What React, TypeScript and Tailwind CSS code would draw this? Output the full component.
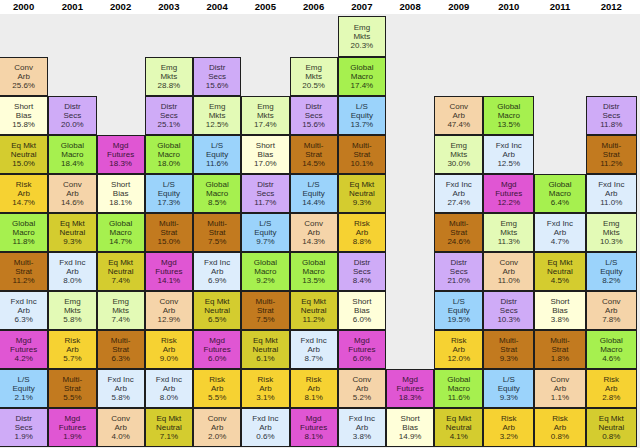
import React from "react";

type Strat = { a: string; b: string; bg: string; fg: string };

const S: Record<string, Strat> = {
  conv: { a: "Conv", b: "Arb", bg: "bg-[#f5d4a9]", fg: "text-[#3a3328]" },
  short: { a: "Short", b: "Bias", bg: "bg-[#ffffd9]", fg: "text-[#33332c]" },
  eqmn: { a: "Eq Mkt", b: "Neutral", bg: "bg-[#d4cc2f]", fg: "text-[#2f2c10]" },
  risk: { a: "Risk", b: "Arb", bg: "bg-[#f6d232]", fg: "text-[#3a3010]" },
  macro: { a: "Global", b: "Macro", bg: "bg-[#a6f04f]", fg: "text-[#263a14]" },
  multi: { a: "Multi-", b: "Strat", bg: "bg-[#c27a1f]", fg: "text-[#3b2508]" },
  fxd: { a: "Fxd Inc", b: "Arb", bg: "bg-[#ddedfc]", fg: "text-[#2e343c]" },
  mgd: { a: "Mgd", b: "Futures", bg: "bg-[#e056d3]", fg: "text-[#3c1538]" },
  ls: { a: "L/S", b: "Equity", bg: "bg-[#9bd3fb]", fg: "text-[#1e3444]" },
  distr: { a: "Distr", b: "Secs", bg: "bg-[#cfabf7]", fg: "text-[#342a40]" },
  emg: { a: "Emg", b: "Mkts", bg: "bg-[#e3fab6]", fg: "text-[#343a2c]" },
};

const years: { year: string; cells: [string, string][] }[] = [
  { year: "2000", cells: [["conv", "25.6"], ["short", "15.8"], ["eqmn", "15.0"], ["risk", "14.7"], ["macro", "11.8"], ["multi", "11.2"], ["fxd", "6.3"], ["mgd", "4.2"], ["ls", "2.1"], ["distr", "1.9"]] },
  { year: "2001", cells: [["distr", "20.0"], ["macro", "18.4"], ["conv", "14.6"], ["eqmn", "9.3"], ["fxd", "8.0"], ["emg", "5.8"], ["risk", "5.7"], ["multi", "5.5"], ["mgd", "1.9"]] },
  { year: "2002", cells: [["mgd", "18.3"], ["short", "18.1"], ["macro", "14.7"], ["eqmn", "7.4"], ["emg", "7.4"], ["multi", "6.3"], ["fxd", "5.8"], ["conv", "4.0"]] },
  { year: "2003", cells: [["emg", "28.8"], ["distr", "25.1"], ["macro", "18.0"], ["ls", "17.3"], ["multi", "15.0"], ["mgd", "14.1"], ["conv", "12.9"], ["risk", "9.0"], ["fxd", "8.0"], ["eqmn", "7.1"]] },
  { year: "2004", cells: [["distr", "15.6"], ["emg", "12.5"], ["ls", "11.6"], ["macro", "8.5"], ["multi", "7.5"], ["fxd", "6.9"], ["eqmn", "6.5"], ["mgd", "6.0"], ["risk", "5.5"], ["conv", "2.0"]] },
  { year: "2005", cells: [["emg", "17.4"], ["short", "17.0"], ["distr", "11.7"], ["ls", "9.7"], ["macro", "9.2"], ["multi", "7.5"], ["eqmn", "6.1"], ["risk", "3.1"], ["fxd", "0.6"]] },
  { year: "2006", cells: [["emg", "20.5"], ["distr", "15.6"], ["multi", "14.5"], ["ls", "14.4"], ["conv", "14.3"], ["macro", "13.5"], ["eqmn", "11.2"], ["fxd", "8.7"], ["risk", "8.1"], ["mgd", "8.1"]] },
  { year: "2007", cells: [["emg", "20.3"], ["macro", "17.4"], ["ls", "13.7"], ["multi", "10.1"], ["eqmn", "9.3"], ["risk", "8.8"], ["distr", "8.4"], ["short", "6.0"], ["mgd", "6.0"], ["conv", "5.2"], ["fxd", "3.8"]] },
  { year: "2008", cells: [["mgd", "18.3"], ["short", "14.9"]] },
  { year: "2009", cells: [["conv", "47.4"], ["emg", "30.0"], ["fxd", "27.4"], ["multi", "24.6"], ["distr", "21.0"], ["ls", "19.5"], ["risk", "12.0"], ["macro", "11.6"], ["eqmn", "4.1"]] },
  { year: "2010", cells: [["macro", "13.5"], ["fxd", "12.5"], ["mgd", "12.2"], ["emg", "11.3"], ["conv", "11.0"], ["distr", "10.3"], ["multi", "9.3"], ["ls", "9.3"], ["risk", "3.2"]] },
  { year: "2011", cells: [["macro", "6.4"], ["fxd", "4.7"], ["eqmn", "4.5"], ["short", "3.8"], ["multi", "1.8"], ["conv", "1.1"], ["risk", "0.8"]] },
  { year: "2012", cells: [["distr", "11.8"], ["multi", "11.2"], ["fxd", "11.0"], ["emg", "10.3"], ["ls", "8.2"], ["conv", "7.8"], ["macro", "4.6"], ["risk", "2.8"], ["eqmn", "0.8"]] },
];

const cols = "grid grid-cols-[49.25px_repeat(8,48.25px)_49px_51px_51.4px_51.3px]";

export default function App() {
  return (
    <div className="w-[640px] h-[448px] overflow-hidden bg-[#ededed] font-['Liberation_Sans',Arial,sans-serif]">
      <div className="h-[14px] bg-white">
        <div className={`${cols} -ml-px`}>
          {years.map((y) => (
            <div key={y.year} className="text-center text-[9.5px] font-bold leading-[14px] text-black">
              {y.year}
            </div>
          ))}
        </div>
      </div>
      <div className={`${cols} -ml-px h-[433px] items-end`}>
        {years.map((y) => (
          <div key={y.year} className="flex flex-col">
            {y.cells.map(([k, v], i) => {
              const s = S[k];
              const tall = y.cells.length === 11 && i === 0;
              return (
                <div
                  key={i}
                  className={`${s.bg} ${s.fg} ${tall ? "h-[41px]" : "h-[39px]"} border border-[#1e1e1e] flex flex-col items-center justify-center text-[8px] leading-[9.3px]`}
                >
                  <span>{s.a}</span>
                  <span>{s.b}</span>
                  <span>{v}%</span>
                </div>
              );
            })}
          </div>
        ))}
      </div>
    </div>
  );
}
